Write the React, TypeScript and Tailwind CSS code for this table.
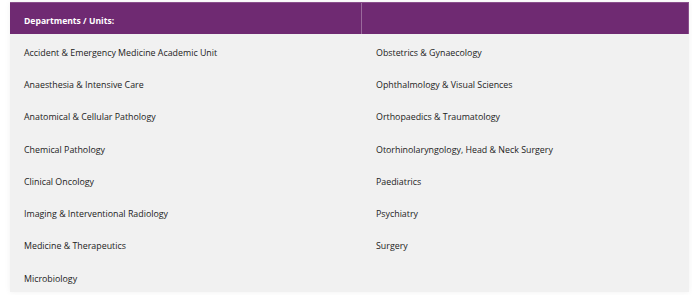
import React from 'react';

const leftCol = [
  'Accident & Emergency Medicine Academic Unit',
  'Anaesthesia & Intensive Care',
  'Anatomical & Cellular Pathology',
  'Chemical Pathology',
  'Clinical Oncology',
  'Imaging & Interventional Radiology',
  'Medicine & Therapeutics',
  'Microbiology',
];

const rightCol = [
  'Obstetrics & Gynaecology',
  'Ophthalmology & Visual Sciences',
  'Orthopaedics & Traumatology',
  'Otorhinolaryngology, Head & Neck Surgery',
  'Paediatrics',
  'Psychiatry',
  'Surgery',
  '',
];

const App: React.FC = () => {
  return (
    <div className="w-[692px] h-[295px] bg-white pt-[2px] pl-[10px] font-['Open_Sans',sans-serif] text-[8.85px] text-[#222]">
      <div className="w-[679px] shadow-[0_0_6px_rgba(0,0,0,0.06)]">
        {/* Header */}
        <div className="grid grid-cols-[352px_1fr] h-[32px] bg-[#6f2a72] border-t border-r border-[#8a4f8c]">
          <div className="flex items-center pl-[14px] pt-[6px] text-[8.6px] font-bold text-white border-r border-[#9a6a9c]">
            Departments / Units:
          </div>
          <div />
        </div>

        {/* Rows */}
        <div className="bg-[#f1f1f1]">
          {leftCol.map((name, i) => (
            <div key={name} className="grid grid-cols-[352px_1fr] h-[32.25px]">
              <div className="flex items-center pl-[14px] pt-[7px]">{name}</div>
              <div className="flex items-center pl-[14px] pt-[7px]">{rightCol[i]}</div>
            </div>
          ))}
        </div>
      </div>
    </div>
  );
};

export default App;
